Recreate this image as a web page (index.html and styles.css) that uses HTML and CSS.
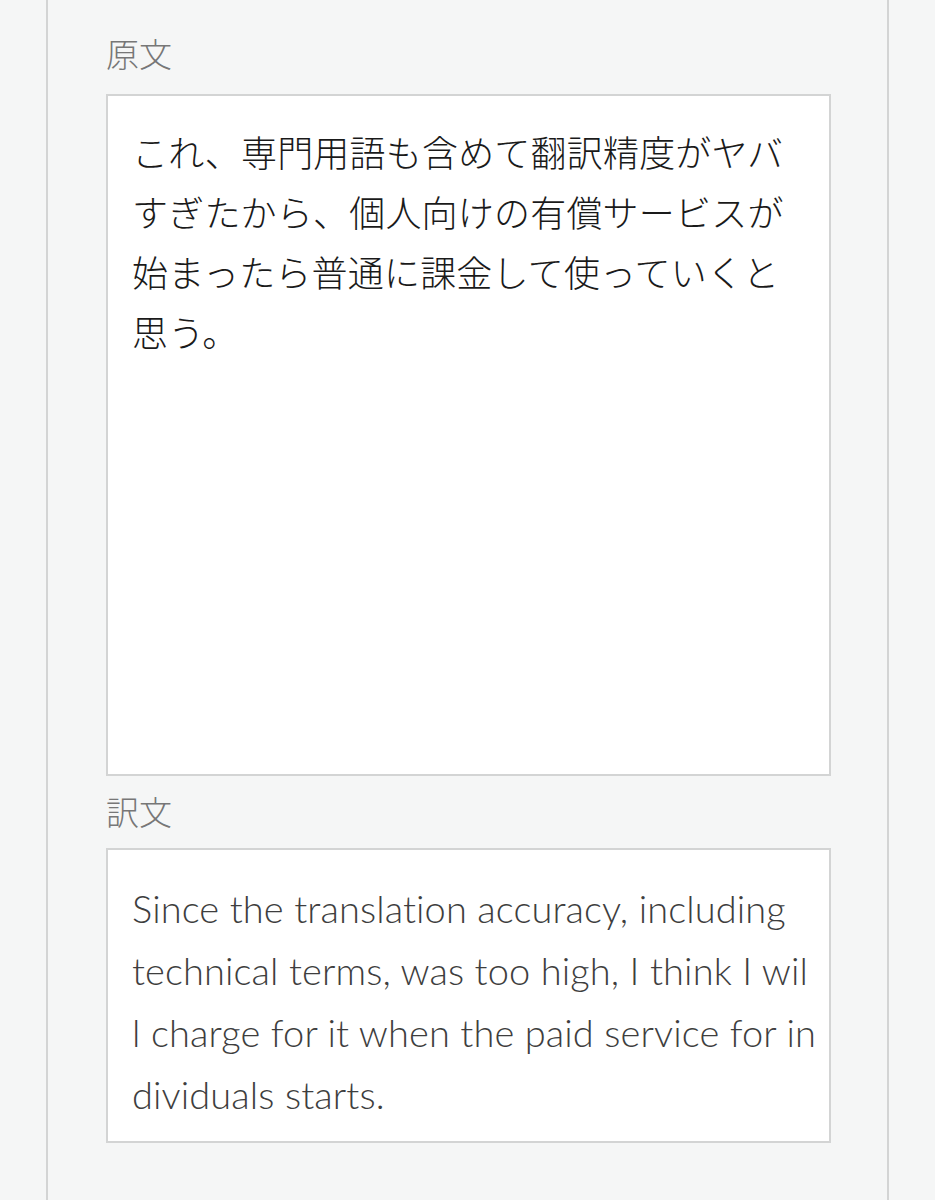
FILE: index.html
```html
<!DOCTYPE html>
<html lang="ja">
<head>
<meta charset="utf-8">
<title>翻訳</title>
<link rel="stylesheet" href="styles.css">
</head>
<body>
<main class="column">
  <section class="field">
    <div class="label">原文</div>
    <div class="box box-source">これ、専門用語も含めて翻訳精度がヤバ<br>すぎたから、個人向けの有償サービスが<br>始まったら普通に課金して使っていくと<br>思う。</div>
  </section>
  <section class="field">
    <div class="label">訳文</div>
    <div class="box box-target">Since the translation accuracy, including<br>technical terms, was too high, I think I wil<br>l charge for it when the paid service for in<br>dividuals starts.</div>
  </section>
</main>
</body>
</html>
```
FILE: styles.css
```css
html, body {
  margin: 0;
  padding: 0;
  background: #f5f6f6;
  height: 100%;
}
.column {
  margin-left: 46px;
  width: 725px;
  min-height: 1200px;
  border-left: 2px solid #d3d4d4;
  border-right: 2px solid #d3d4d4;
  padding: 28px 56px 0 58px;
  box-sizing: content-box;
  display: flex;
  flex-direction: column;
}
.field {
  display: flex;
  flex-direction: column;
}
.label {
  font-family: "Noto Sans CJK JP", sans-serif;
  font-weight: 300;
  font-size: 33px;
  line-height: 50px;
  color: #777;
  height: 66px;
}
.box {
  background: #fff;
  border: 2px solid #d3d4d4;
  box-sizing: border-box;
  padding: 20px 24px;
}
.box-source {
  height: 682px;
  padding-top: 25px;
  font-family: "Noto Sans CJK JP", sans-serif;
  font-weight: 300;
  font-size: 36px;
  line-height: 60px;
  color: #1a1a1a;
  letter-spacing: 0.2px;
}
.box-target {
  margin-top: 6px;
  height: 295px;
  font-family: "Lato", "Open Sans", sans-serif;
  font-weight: 300;
  font-size: 38px;
  line-height: 62px;
  color: #3e3e3e;
  letter-spacing: 0.1px;
  white-space: nowrap;
  padding-top: 27px;
}
.field + .field .label {
  margin-top: 10px;
  height: 56px;
}
```
